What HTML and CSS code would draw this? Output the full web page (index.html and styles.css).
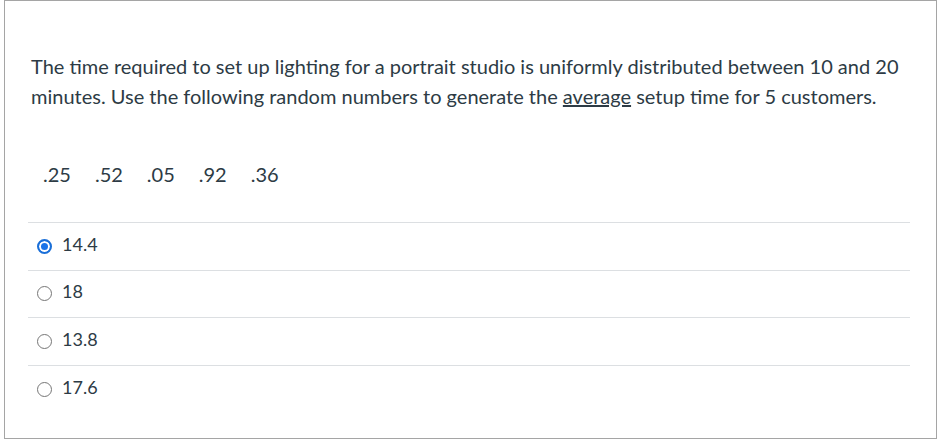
FILE: index.html
```html
<!DOCTYPE html>
<html>
<head>
<meta charset="utf-8">
<link rel="stylesheet" href="styles.css">
</head>
<body>
<div class="question">
  <div class="question-text">
    <p>The time required to set up lighting for a portrait studio is uniformly distributed between 10 and 20 minutes. Use the following random numbers to generate the <u>average</u> setup time for 5 customers.</p>
    <p class="numbers"><span>.25</span><span>.52</span><span>.05</span><span>.92</span><span>.36</span></p>
  </div>
  <div class="answers">
    <label class="answer"><span class="radio checked"></span><span class="label">14.4</span></label>
    <label class="answer"><span class="radio"></span><span class="label">18</span></label>
    <label class="answer"><span class="radio"></span><span class="label">13.8</span></label>
    <label class="answer"><span class="radio"></span><span class="label">17.6</span></label>
  </div>
</div>
</body>
</html>
```
FILE: styles.css
```css
html, body {
  margin: 0;
  padding: 0;
  background: #fff;
}
body {
  font-family: Lato, "Liberation Sans", sans-serif;
  color: #2d3b45;
}
.question {
  box-sizing: border-box;
  margin-left: 4px;
  width: 933px;
  height: 439px;
  border: 1px solid #a5a5a5;
  padding: 50px 26px 0 23px;
}
.question-text {
  padding-left: 3px;
}
.question-text p {
  margin: 0;
  font-size: 20px;
  line-height: 30px;
}
.question-text p.numbers {
  margin-top: 48px;
  padding-left: 12px;
}
.numbers span {
  margin-right: 24px;
}
.answers {
  margin-top: 33px;
}
.answer {
  display: flex;
  align-items: center;
  height: 46.67px;
  border-top: 1px solid #dcdfe2;
  padding-left: 9px;
  font-size: 18px;
}
.label {
  margin-bottom: 5px;
}
.radio {
  box-sizing: border-box;
  width: 15px;
  height: 15px;
  border-radius: 50%;
  border: 1px solid #767676;
  margin-right: 10px;
  flex: none;
  background: #fff;
}
.radio.checked {
  border: 2px solid #1a6fd8;
  background: #1a73e8;
  box-shadow: inset 0 0 0 2px #fff;
}
```
